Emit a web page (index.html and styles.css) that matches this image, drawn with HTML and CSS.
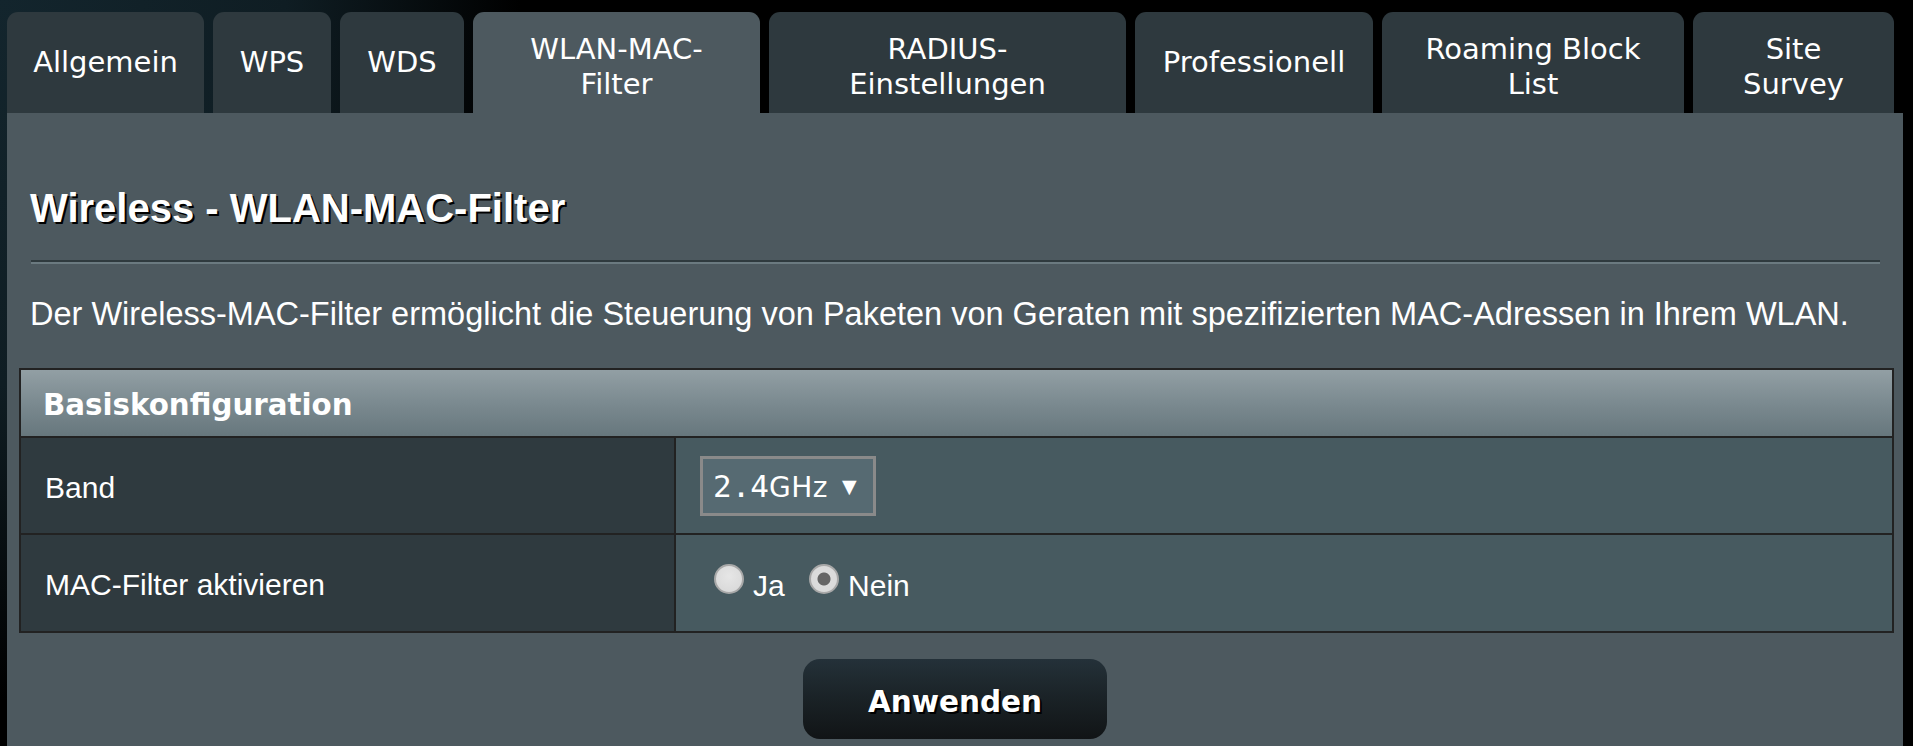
FILE: index.html
```html
<!DOCTYPE html>
<html lang="de">
<head>
<meta charset="utf-8">
<title>Wireless - WLAN-MAC-Filter</title>
<link rel="stylesheet" href="styles.css">
</head>
<body>
<div class="page">
  <nav class="tabs">
    <div class="tab w-allg">Allgemein</div>
    <div class="tab w-wps">WPS</div>
    <div class="tab w-wds">WDS</div>
    <div class="tab two w-mac active">WLAN-MAC-<br>Filter</div>
    <div class="tab two w-radius">RADIUS-<br>Einstellungen</div>
    <div class="tab w-prof">Professionell</div>
    <div class="tab two w-roam">Roaming Block<br>List</div>
    <div class="tab two w-site">Site<br>Survey</div>
  </nav>
  <main class="panel">
    <h1 class="title">Wireless - WLAN-MAC-Filter</h1>
    <div class="rule"></div>
    <p class="desc">Der Wireless-MAC-Filter ermöglicht die Steuerung von Paketen von Geraten mit spezifizierten MAC-Adressen in Ihrem WLAN.</p>
    <table class="cfg">
      <thead>
        <tr><th colspan="2" class="head">Basiskonfiguration</th></tr>
      </thead>
      <tbody>
        <tr class="row-band">
          <th class="label">Band</th>
          <td class="value"><div class="select"><span class="sel-text">2.4<span class="ghz">GHz</span></span><span class="sel-arrow">▼</span></div></td>
        </tr>
        <tr class="row-mac">
          <th class="label">MAC-Filter aktivieren</th>
          <td class="value">
            <label class="radio"><input type="radio" name="mf" value="1"><span>Ja</span></label>
            <label class="radio"><input type="radio" name="mf" value="0" checked><span>Nein</span></label>
          </td>
        </tr>
      </tbody>
    </table>
    <div class="actions"><button class="apply" type="button">Anwenden</button></div>
  </main>
</div>
</body>
</html>
```
FILE: styles.css
```css
html, body {
  margin: 0;
  padding: 0;
  height: 100%;
}
body {
  background: radial-gradient(ellipse 520px 700px at 0 0, #13252d 0%, #0f1d23 55%, #000 100%), #000;
  background-color: #000;
  overflow: hidden;
}
.page {
  padding: 12px 0 0 7px;
}
.tabs {
  display: flex;
  gap: 9px;
  height: 101px;
}
.tab {
  height: 101px;
  box-sizing: border-box;
  background: #2e393e;
  border-radius: 11px 11px 0 0;
  color: #fff;
  font-family: "DejaVu Sans", Verdana, sans-serif;
  font-size: 29px;
  line-height: 35px;
  text-align: center;
  display: flex;
  align-items: center;
  justify-content: center;
  padding-top: 0;
}
.tab.two {
  padding-top: 8px;
}
.tab.active {
  background: #4d595f;
}
.w-allg { width: 197px; }
.w-wps { width: 118px; }
.w-wds { width: 124px; }
.w-mac { width: 287px; }
.w-radius { width: 357px; }
.w-prof { width: 238px; }
.w-roam { width: 302px; }
.w-site { width: 201px; }

.panel {
  width: 1896px;
  min-height: 700px;
  box-sizing: border-box;
  background: #4d595f;
  padding: 70px 9px 0 12px;
}
.title {
  margin: 0 0 31px 11px;
  font-family: "Liberation Sans", Arial, sans-serif;
  font-weight: bold;
  font-size: 40px;
  line-height: 46px;
  color: #fff;
  text-shadow: 2px 2px 0 #000;
  position: relative;
  top: 2px;
}
.rule {
  margin: 0 14px 0 12px;
  height: 2px;
  background: #2f3a3e;
  border-bottom: 2px solid #6b7a80;
}
.desc {
  margin: 31px 0 35px 11px;
  font-family: "Liberation Sans", Arial, sans-serif;
  font-size: 32.5px;
  line-height: 38px;
  color: #fff;
}
.cfg {
  width: 1875px;
  border-collapse: collapse;
  border: 2px solid #222;
  font-family: "Liberation Sans", Arial, sans-serif;
}
.cfg th, .cfg td {
  border: 2px solid #222;
  padding: 0;
}
.head {
  height: 63px;
  text-align: left;
  padding: 3px 0 0 22px !important;
  background: linear-gradient(to bottom, #929fa4 0%, #7b8a90 50%, #67777d 100%);
  color: #fff;
  font-family: "DejaVu Sans", Verdana, sans-serif;
  font-weight: bold;
  font-size: 29.3px;
}
.label {
  width: 629px;
  text-align: left;
  font-weight: normal;
  font-size: 30px;
  color: #fff;
  background: #2f3a3f;
  padding: 4px 0 0 24px !important;
}
.value {
  background: #475a60;
  padding: 0 0 0 24px !important;
  color: #fff;
  font-size: 30px;
}
.row-band .label { height: 91px; }
.row-band .value { height: 95px; }
.row-mac .label { height: 92px; }
.row-mac .value { height: 96px; }

.select {
  display: inline-flex;
  align-items: center;
  width: 176px;
  height: 60px;
  box-sizing: border-box;
  border: 3px solid #8a8a8a;
  background: #566a72;
  padding-left: 10px;
  color: #fff;
  vertical-align: middle;
}
.sel-text {
  font-family: "DejaVu Sans Mono", monospace;
  font-size: 31px;
}
.ghz {
  font-family: "DejaVu Sans", sans-serif;
  font-size: 28px;
  letter-spacing: 0.5px;
}
.sel-arrow {
  font-family: "DejaVu Sans", sans-serif;
  font-size: 19px;
  margin-left: 14px;
}
.radio {
  display: inline-flex;
  align-items: center;
  margin-right: 2px;
  font-family: "Liberation Sans", Arial, sans-serif;
  font-size: 30px;
  color: #fff;
  vertical-align: middle;
}
.radio span {
  margin-top: 6px;
}
.radio input {
  -webkit-appearance: none;
  appearance: none;
  margin: 0 9px 0 14px;
  width: 30px;
  height: 30px;
  border-radius: 50%;
  box-sizing: border-box;
  border: 2px solid #a8a8a8;
  background: radial-gradient(circle at 50% 40%, #e6e6e6 0%, #d6d6d6 100%);
  position: relative;
  top: -4px;
}
.radio input:checked {
  background: radial-gradient(circle, #666 0, #666 6px, #dcdcdc 7px, #d8d8d8 100%);
}
.actions {
  display: flex;
  justify-content: center;
  padding-top: 26px;
  margin-left: -12px;
  margin-right: -9px;
}
.apply {
  width: 304px;
  height: 80px;
  border: none;
  border-radius: 17px;
  background: linear-gradient(to bottom, #243139 0%, #1a2226 50%, #111416 100%);
  color: #fff;
  font-family: "DejaVu Sans", Verdana, sans-serif;
  font-weight: bold;
  font-size: 29.5px;
  text-shadow: 2px 2px 0 #000;
  padding: 6px 0 0 0;
}
```
